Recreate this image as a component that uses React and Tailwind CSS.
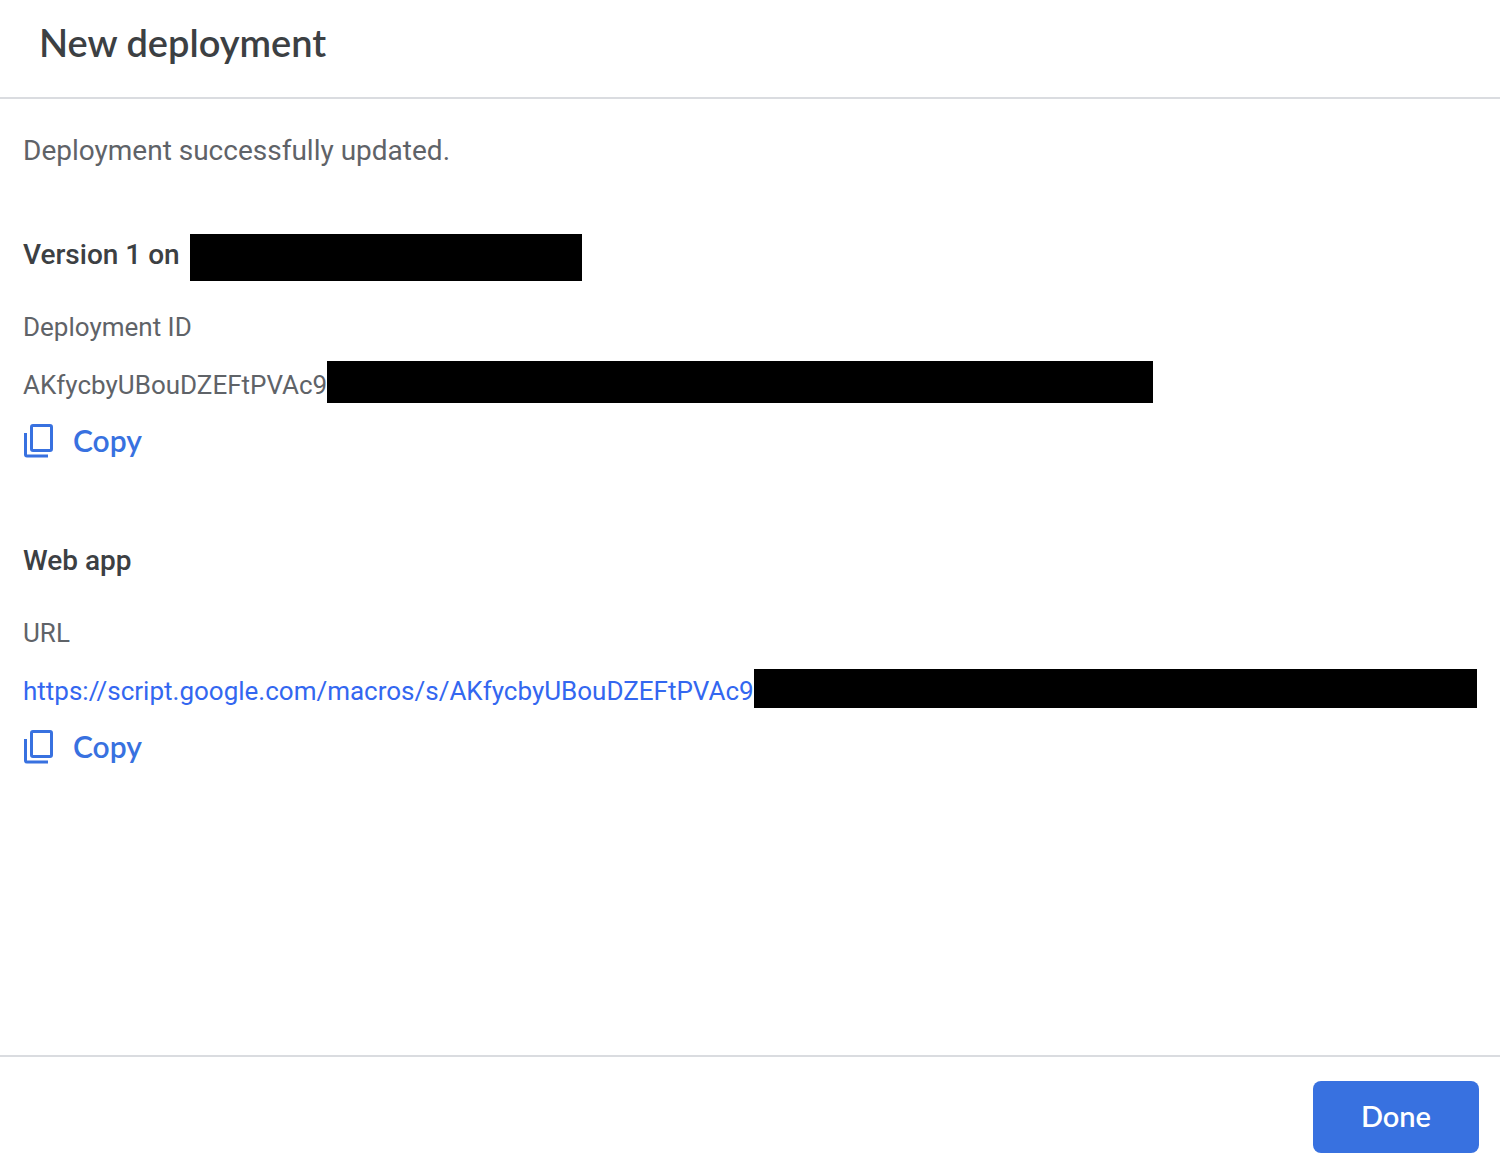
import React from 'react';
import { clsx } from 'clsx';

function CopyIcon() {
  return (
    <svg viewBox="0 0 30 34" className="h-[34px] w-[30px]" fill="none" aria-hidden="true">
      <rect x="8.5" y="1.5" width="20" height="25" rx="1.5" stroke="currentColor" strokeWidth="3" />
      <path d="M2.5 9V30.5Q2.5 32 4 32H25" stroke="currentColor" strokeWidth="3" />
    </svg>
  );
}

function CopyButton() {
  return (
    <button
      type="button"
      className="mt-2 flex h-12 items-center gap-5 font-['Lato'] text-[30px] font-semibold text-[#3871e0]"
    >
      <CopyIcon />
      <span className="pb-0.5">Copy</span>
    </button>
  );
}

// Solid bar that hides the rest of a private value
function Redacted({ className }) {
  return <span className={clsx('bg-black', className)} />;
}

function Section({ title, titleBar, label, children }) {
  return (
    <section>
      <h2 className="flex h-12 items-start gap-2.5 text-[28px] leading-[50px] font-medium text-[#3c4043]">
        {title}
        {titleBar}
      </h2>
      <h3 className="mt-8 mb-4 text-[26px] leading-[35px]">{label}</h3>
      <div className="flex h-12 items-start text-[26px] leading-12">{children}</div>
      <CopyButton />
    </section>
  );
}

export default function App() {
  return (
    <div className="flex min-h-screen flex-col bg-white font-['Roboto',sans-serif] text-[#5f6368]">
      <header className="border-b-2 border-[#dadce0] px-[39px] pt-[18px] pb-[30px]">
        <h1 className="font-['Lato'] text-[38px] leading-[49px] font-semibold text-[#3c4043]">
          New deployment
        </h1>
      </header>

      <main className="flex-1 px-[23px] pt-[33px]">
        <p className="mb-15 text-[28px] leading-[38px]">Deployment successfully updated.</p>

        <div className="flex flex-col gap-[71px]">
          <Section
            title="Version 1 on"
            titleBar={<Redacted className="mt-1 h-[47px] w-[392px]" />}
            label="Deployment ID"
          >
            <span>AKfycbyUBouDZEFtPVAc9</span>
            <Redacted className="h-[42px] w-[826px]" />
          </Section>

          <Section title="Web app" label="URL">
            <a href="#" className="text-[#3367f0]">
              https://script.google.com/macros/s/AKfycbyUBouDZEFtPVAc9
            </a>
            <Redacted className="mt-0.5 h-[39px] flex-1" />
          </Section>
        </div>
      </main>

      <footer className="flex justify-end border-t-2 border-[#dadce0] pt-6 pr-[21px] pb-[13px]">
        <button
          type="button"
          className="h-18 rounded-lg bg-[#3871e0] px-12 pb-0.5 font-['Lato'] text-[29px] font-semibold text-white"
        >
          Done
        </button>
      </footer>
    </div>
  );
}
